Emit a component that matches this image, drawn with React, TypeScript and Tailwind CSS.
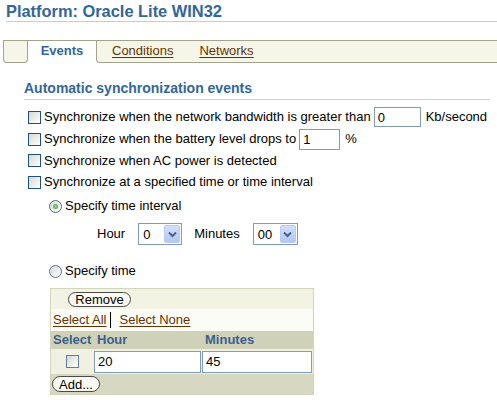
import React from "react";

function CheckBox({ light = false }: { light?: boolean }) {
  return (
    <span
      className={`inline-block w-[13px] h-[13px] shrink-0 border bg-linear-to-br from-[#d8d8d2] to-white ${
        light ? "border-[#5f7fa8]" : "border-[#1c5180]"
      }`}
    />
  );
}

function Radio({ checked = false }: { checked?: boolean }) {
  return (
    <span className="relative inline-flex w-[13px] h-[13px] shrink-0 items-center justify-center rounded-full border border-[#56708f] bg-linear-to-br from-[#d8d8d2] to-white">
      {checked && (
        <span className="w-[5px] h-[5px] rounded-full bg-radial from-[#9be29b] to-[#2a8f2a]" />
      )}
    </span>
  );
}

function DropDown({ value, width }: { value: string; width: string }) {
  return (
    <span
      className={`inline-flex h-[22px] items-center justify-between border border-[#7f9db9] bg-white ${width}`}
    >
      <span className="pl-[4px] text-[13px] leading-none text-black">{value}</span>
      <span className="mr-[1px] flex h-[18px] w-[16px] items-center justify-center rounded-[2px] border border-[#b9cbf3] bg-linear-to-b from-[#d2defc] to-[#b3c7f5]">
        <svg width="9" height="7" viewBox="0 0 9 7">
          <path d="M1 1.5 L4.5 5 L8 1.5" fill="none" stroke="#4d6185" strokeWidth="2" />
        </svg>
      </span>
    </span>
  );
}

function TextBox({ value, className }: { value: string; className: string }) {
  return (
    <span
      className={`inline-flex items-center border border-[#7f9db9] bg-white pl-[3px] text-[13px] leading-none text-black ${className}`}
    >
      {value}
    </span>
  );
}

function PillButton({ label, className }: { label: string; className: string }) {
  return (
    <span
      className={`inline-flex items-center justify-center rounded-[8px] border border-[#4a4a4a] bg-[#fafaf2] text-[13px] leading-none text-black ${className}`}
    >
      {label}
    </span>
  );
}

export default function App() {
  return (
    <div className="w-[497px] h-[400px] overflow-hidden bg-white font-['Liberation_Sans',Arial,sans-serif] text-[13px] text-black">
      {/* page title */}
      <div className="ml-[6px] h-[22px] border-b border-[#cdcdb9]">
        <h1 className="pt-[1px] text-[16.4px] font-bold leading-[21px] text-[#336699]">
          Platform: Oracle Lite WIN32
        </h1>
      </div>

      {/* sub tabs */}
      <div className="mt-[18px] ml-[3px] -mr-[4px] flex h-[23px] border-t border-[#a2a48e]">
        <div className="w-[25px] rounded-bl-[4px] rounded-br-[4px] border-b border-l border-r border-[#a2a48e] bg-[#f6f6e8]" />
        <div className="flex w-[68px] items-center justify-center bg-white pb-[2px]">
          <span className="text-[13px] font-bold text-[#336699]">Events</span>
        </div>
        <div className="flex flex-1 items-center rounded-bl-[4px] border-b border-l border-[#a2a48e] bg-[#f6f6e8] pb-[2px]">
          <span className="ml-[15px] text-[13px] text-[#663300] underline underline-offset-[2px]">
            Conditions
          </span>
          <span className="ml-[26px] text-[13px] text-[#663300] underline underline-offset-[2px]">
            Networks
          </span>
        </div>
      </div>

      {/* events section */}
      <div className="ml-[24px] mt-[17px] mr-[7px]">
        <div className="h-[20px] border-b border-[#d3d3bb]">
          <h2 className="text-[14px] font-bold leading-[17px] text-[#336699]">
            Automatic synchronization events
          </h2>
        </div>

        <div className="ml-[4px] mt-[6px] flex h-[22px] items-center">
          <CheckBox />
          <span className="ml-[3px]">Synchronize when the network bandwidth is greater than</span>
          <TextBox value="0" className="ml-[3px] h-[20px] w-[47px]" />
          <span className="ml-[5px]">Kb/second</span>
        </div>
        <div className="ml-[4px] flex h-[22px] items-center">
          <CheckBox />
          <span className="ml-[3px]">Synchronize when the battery level drops to</span>
          <TextBox value="1" className="ml-[3px] h-[21px] w-[41px]" />
          <span className="ml-[5px]">%</span>
        </div>
        <div className="ml-[4px] flex h-[21px] items-center">
          <CheckBox />
          <span className="ml-[3px]">Synchronize when AC power is detected</span>
        </div>
        <div className="ml-[4px] flex h-[22px] items-center">
          <CheckBox />
          <span className="ml-[3px]">Synchronize at a specified time or time interval</span>
        </div>

        <div className="ml-[25px] mt-[2px] flex h-[22px] items-center">
          <Radio checked />
          <span className="ml-[3px]">Specify time interval</span>
        </div>
        <div className="ml-[73px] mt-[5px] flex h-[24px] items-center">
          <span>Hour</span>
          <span className="ml-[13px]">
            <DropDown value="0" width="w-[44px]" />
          </span>
          <span className="ml-[12px]">Minutes</span>
          <span className="ml-[13px]">
            <DropDown value="00" width="w-[45px]" />
          </span>
        </div>
        <div className="ml-[25px] mt-[14px] flex h-[22px] items-center">
          <Radio />
          <span className="ml-[3px]">Specify time</span>
        </div>

        {/* time table */}
        <div className="ml-[26px] mt-[6px] w-[264px] border border-[#d2d4bc]">
          <div className="flex h-[20px] items-center bg-[#f3f3e3]">
            <PillButton label="Remove" className="ml-[17px] h-[15px] w-[63px]" />
          </div>
          <div className="flex h-[22px] items-center bg-[#fcfcf6] pl-[2px]">
            <span className="text-[#663300] underline underline-offset-[2px]">Select All</span>
            <span className="ml-[4px] h-[16px] w-[1px] bg-black" />
            <span className="ml-[8px] text-[#663300] underline underline-offset-[2px]">Select None</span>
          </div>
          <div className="flex h-[18px] items-center bg-[#cfd1b8] text-[13px] font-bold text-[#3d5f8c]">
            <span className="w-[43px] pl-[2px]">Select</span>
            <span className="w-[108px] pl-[3px]">Hour</span>
            <span className="pl-[3px]">Minutes</span>
          </div>
          <div className="flex h-[25px] items-center bg-[#f1f1e2]">
            <span className="flex w-[43px] justify-center">
              <CheckBox light />
            </span>
            <TextBox value="20" className="h-[22px] w-[107px]" />
            <TextBox value="45" className="ml-[1px] h-[22px] w-[110px]" />
          </div>
          <div className="flex h-[20px] items-center bg-[#d6d8c1]">
            <PillButton label="Add..." className="ml-[1px] h-[16px] w-[48px]" />
          </div>
        </div>
      </div>
    </div>
  );
}
